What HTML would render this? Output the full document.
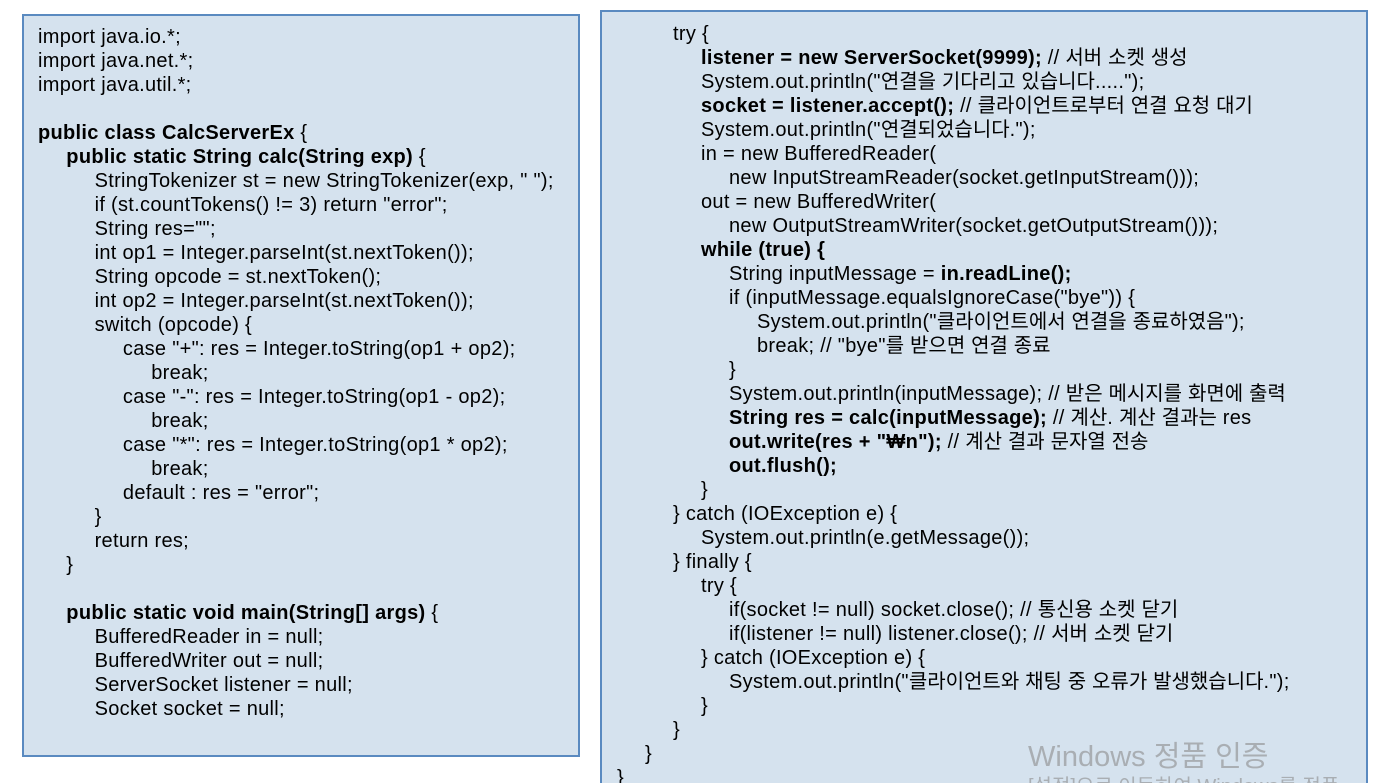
<!DOCTYPE html>
<html><head><meta charset="utf-8"><style>
html,body{margin:0;width:1382px;height:783px;overflow:hidden}
body{background:#fff;position:relative;font-family:"Liberation Sans","Noto Sans CJK KR",sans-serif;font-size:20px;letter-spacing:0.3px;color:#000}
.box{position:absolute;background:#d5e2ee;border:2px solid #5a8ac0;box-sizing:border-box}
.l{position:absolute;white-space:pre;line-height:24px;height:24px}
.k{font-size:20px;letter-spacing:0}
b{font-weight:bold}
.wm{position:absolute;color:#a9aeb3;white-space:pre;letter-spacing:0}
</style></head><body>
<div class="box" style="left:22px;top:14px;width:558px;height:743px"></div>
<div class="box" style="left:600px;top:10px;width:768px;height:790px"></div>
<div id="L"></div>
<div id="R"></div>
<div class="wm" style="left:1028px;top:733px;font-size:29px">Windows 정품 인증</div>
<div class="wm" style="left:1028px;top:770px;font-size:20px">[설정]으로 이동하여 Windows를 정품</div>
<script>
const L=[
[0,"import java.io.*;"],[0,"import java.net.*;"],[0,"import java.util.*;"],[0,""],
[0,"<b>public class CalcServerEx</b> {"],
[1,"<b>public static String calc(String exp)</b> {"],
[2,"StringTokenizer st = new StringTokenizer(exp, \" \");"],
[2,"if (st.countTokens() != 3) return \"error\";"],
[2,"String res=\"\";"],
[2,"int op1 = Integer.parseInt(st.nextToken());"],
[2,"String opcode = st.nextToken();"],
[2,"int op2 = Integer.parseInt(st.nextToken());"],
[2,"switch (opcode) {"],
[3,"case \"+\": res = Integer.toString(op1 + op2);"],
[4,"break;"],
[3,"case \"-\": res = Integer.toString(op1 - op2);"],
[4,"break;"],
[3,"case \"*\": res = Integer.toString(op1 * op2);"],
[4,"break;"],
[3,"default : res = \"error\";"],
[2,"}"],
[2,"return res;"],
[1,"}"],
[0,""],
[1,"<b>public static void main(String[] args)</b> {"],
[2,"BufferedReader in = null;"],
[2,"BufferedWriter out = null;"],
[2,"ServerSocket listener = null;"],
[2,"Socket socket = null;"]];
const R=[
[2,"try {"],
[3,"<b>listener = new ServerSocket(9999);</b> // 서버 소켓 생성"],
[3,"System.out.println(\"연결을 기다리고 있습니다.....\");"],
[3,"<b>socket = listener.accept();</b> // 클라이언트로부터 연결 요청 대기"],
[3,"System.out.println(\"연결되었습니다.\");"],
[3,"in = new BufferedReader("],
[4,"new InputStreamReader(socket.getInputStream()));"],
[3,"out = new BufferedWriter("],
[4,"new OutputStreamWriter(socket.getOutputStream()));"],
[3,"<b>while (true) {</b>"],
[4,"String inputMessage = <b>in.readLine();</b>"],
[4,"if (inputMessage.equalsIgnoreCase(\"bye\")) {"],
[5,"System.out.println(\"클라이언트에서 연결을 종료하였음\");"],
[5,"break; // \"bye\"를 받으면 연결 종료"],
[4,"}"],
[4,"System.out.println(inputMessage); // 받은 메시지를 화면에 출력"],
[4,"<b>String res = calc(inputMessage);</b> // 계산. 계산 결과는 res"],
[4,"<b>out.write(res + \"₩n\");</b> // 계산 결과 문자열 전송"],
[4,"<b>out.flush();</b>"],
[3,"}"],
[2,"} catch (IOException e) {"],
[3,"System.out.println(e.getMessage());"],
[2,"} finally {"],
[3,"try {"],
[4,"if(socket != null) socket.close(); // 통신용 소켓 닫기"],
[4,"if(listener != null) listener.close(); // 서버 소켓 닫기"],
[3,"} catch (IOException e) {"],
[4,"System.out.println(\"클라이언트와 채팅 중 오류가 발생했습니다.\");"],
[3,"}"],
[2,"}"],
[1,"}"],
[0,"}"]];
function k(s){return s.replace(/([\uAC00-\uD7A3]+)/g,'<span class="k">$1</span>')}
let h="";
L.forEach((a,i)=>{h+=`<div class="l" style="left:${38+a[0]*28.3}px;top:${25+i*24}px">${k(a[1])}</div>`});
R.forEach((a,i)=>{h+=`<div class="l" style="left:${617+a[0]*28}px;top:${22+i*24}px">${k(a[1])}</div>`});
document.getElementById("L").innerHTML=h;
</script>
</body></html>
